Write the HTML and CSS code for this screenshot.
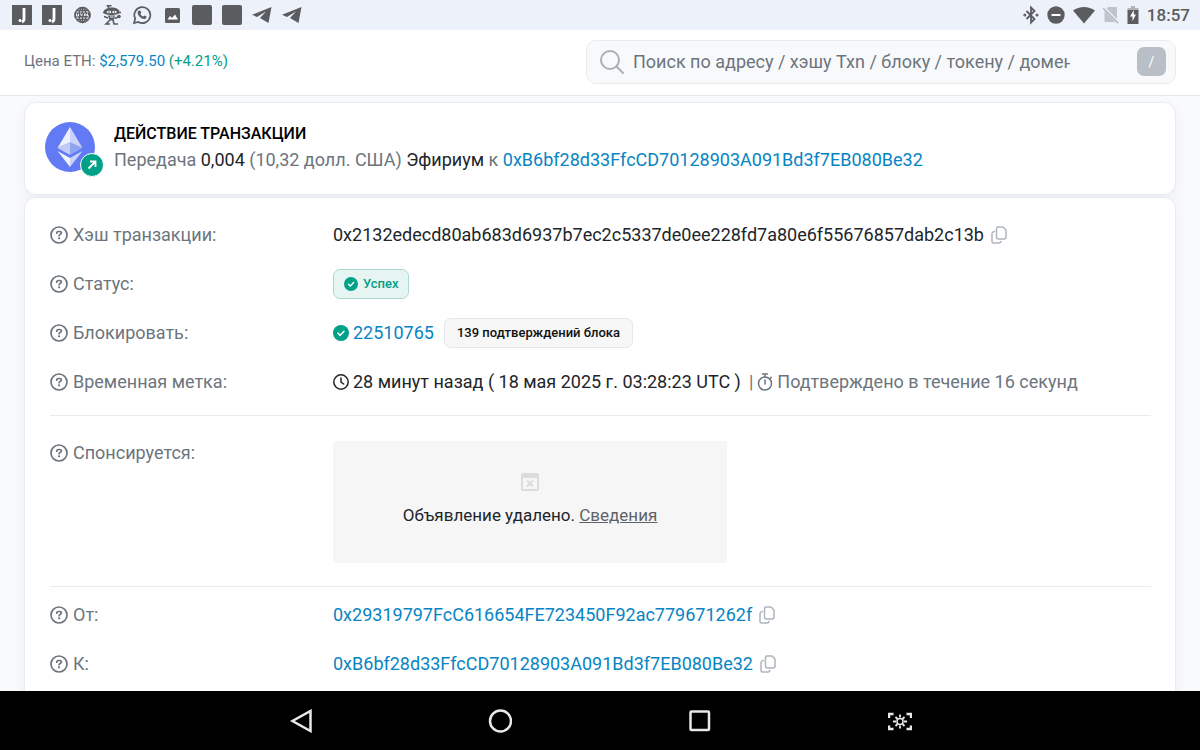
FILE: index.html
```html
<!DOCTYPE html>
<html lang="ru">
<head>
    <meta charset="UTF-8">
    <meta name="viewport" content="width=device-width, initial-scale=1.0">
    <title>Детали транзакции</title>
    <link rel="stylesheet" href="styles.css">
</head>
<body>
    <!-- Shared icons -->
    <svg class="sprite" aria-hidden="true">
        <symbol id="help" viewBox="0 0 18 18">
            <circle cx="9" cy="9" r="8" fill="none" stroke="currentColor" stroke-width="1.7"/>
            <path d="M6.700 7.200c0-1 .8-1.700 1.800-1.700h1.100c1 0 1.800.7 1.800 1.600 0 1.300-2.300 1.400-2.300 2.600" fill="none" stroke="currentColor" stroke-width="1.7" stroke-linecap="round"/>
            <circle cx="9.1" cy="12.300" r="1.100" fill="currentColor"/>
        </symbol>
        <symbol id="copy" viewBox="0 0 16 18">
            <path d="M7 1h5l3 3v7a2 2 0 0 1-2 2H7.500a2 2 0 0 1-2-2V2.500A1.500 1.500 0 0 1 7 1zM3.500 5.500A2.500 2.500 0 0 0 1 7.500v8A1.500 1.500 0 0 0 2.500 17H8a2 2 0 0 0 2-1.500" fill="none" stroke="currentColor" stroke-width="1.5" stroke-linejoin="round" stroke-linecap="round"/>
        </symbol>
        <symbol id="check" viewBox="0 0 16 16">
            <circle cx="8" cy="8" r="8" fill="#00a186"/>
            <path d="M5 8.200l2.200 2.100L11 6.300" fill="none" stroke="#fff" stroke-width="1.600" stroke-linecap="round" stroke-linejoin="round"/>
        </symbol>
        <symbol id="app-j" viewBox="0 0 20 20">
            <path d="M0 0h20v20H0z" fill="#5b5c60"/>
            <path d="M12 3v11c0 1.500-.8 2.500-2 3" fill="none" stroke="#fff" stroke-width="2.800"/>
            <circle cx="8" cy="15.500" r="1.500" fill="#fff"/>
        </symbol>
        <symbol id="plane" viewBox="0 0 20 18">
            <path d="M19.500 1L0 8.800l5 2.200L14 5.500 8 12l8.500 5z" fill="#5b5c60"/>
        </symbol>
    </svg>

    <div class="status-bar">
        <div class="status-apps">
            <svg width="20" height="20"><use href="#app-j"/></svg>
            <svg width="20" height="20"><use href="#app-j"/></svg>
            <svg width="20" height="20" viewBox="0 0 20 20" fill="none" stroke="#5b5c60" stroke-width="1.4">
                <circle cx="10.500" cy="10" r="7.500"/>
                <ellipse cx="10.500" cy="10" rx="3.500" ry="7.500"/>
                <path d="M10.500 2v16M5 5.500h11M5 14.500h11"/>
                <path d="M2.500 10h16" stroke-width="5"/>
                <path d="M4.500 8.500v2.500h2V8.500M8.500 8.500l1 2.500 1-2.500M12.500 11V9H14v2M15.500 8.500V11H17" stroke="#eef2fa" stroke-width="1"/>
            </svg>
            <svg width="20" height="20" viewBox="0 0 20 20">
                <path d="M1.500 7c0-2.200 4-4.500 8.500-4.500S17.500 4.800 17.500 7s-4 3-8 3-8-.8-8-3z" fill="#5b5c60"/>
                <path d="M7 3L5.500.8 9.500.8M1 7.500h18" fill="none" stroke="#5b5c60" stroke-width="1.400"/>
                <ellipse cx="7" cy="7" rx="2.300" ry="1.300" fill="#eef2fa"/>
                <ellipse cx="12.500" cy="7" rx="2.300" ry="1.300" fill="#eef2fa"/>
                <circle cx="7" cy="7" r=".8" fill="#5b5c60"/>
                <circle cx="12.500" cy="7" r=".8" fill="#5b5c60"/>
                <path d="M6 10.500h7l-1.500 5h-4z" fill="#5b5c60"/>
                <path d="M6 13l-4-1.500M8 15l-4 4h4M11 15l1 4h4M12.500 13.500l4-1.500" fill="none" stroke="#5b5c60" stroke-width="1.600"/>
                <circle cx="17" cy="11.500" r="1.800" fill="#5b5c60"/>
                <path d="M8 12h3.500" stroke="#eef2fa"/>
            </svg>
            <svg width="20" height="20" viewBox="0 0 20 20">
                <path d="M2 18l1.200-4.300A8 8 0 1 1 6.300 17z" fill="none" stroke="#5b5c60" stroke-width="1.700"/>
                <path d="M7 5.500l1.500.2.800 2-.9 1.200c.7 1.300 1.600 2.100 2.900 2.700l1.200-1.100 2 .9c.2 1.500-1 2.600-2.400 2.600-3.400-.4-6.300-3.500-6.500-6.300 0-1 .5-1.700 1.400-2.200z" fill="#5b5c60"/>
            </svg>
            <svg width="20" height="20" viewBox="0 0 20 20">
                <rect x="3" y="3" width="15" height="15" rx="1.500" fill="#5b5c60"/>
                <path d="M5.500 14.500L8 11l2 2 3-3.500 3 5z" fill="#fff"/>
            </svg>
            <svg width="20" height="20"><rect width="20" height="20" rx="2" fill="#5b5c60"/></svg>
            <svg width="20" height="20"><rect width="20" height="20" rx="2" fill="#5b5c60"/></svg>
            <svg width="20" height="18"><use href="#plane"/></svg>
            <svg width="20" height="18"><use href="#plane"/></svg>
        </div>
        <div class="status-system">
            <svg width="16" height="20" viewBox="0 0 16 20" fill="none" stroke="#5b5c60" stroke-width="1.800">
                <path d="M3.500 6l8 8L8 17.500v-15L11.500 6l-8 8"/>
                <circle cx="1.800" cy="10" r=".6"/>
                <circle cx="14" cy="10" r=".6"/>
            </svg>
            <svg width="18" height="18" viewBox="0 0 18 18">
                <circle cx="9" cy="9" r="8.700" fill="#5b5c60"/>
                <path d="M4.500 9h9" stroke="#fff" stroke-width="2"/>
            </svg>
            <svg width="22" height="18" viewBox="0 0 22 18"><path d="M0 4.500C6.500-.3 15.500-.3 22 4.500L11 17.500z" fill="#5b5c60"/></svg>
            <svg width="16" height="18" viewBox="0 0 16 18">
                <path d="M5 1h9v15H1.500V5z" fill="#c0c3c9"/>
                <path d="M0 1l15.500 16" stroke="#eef2fa" stroke-width="3"/>
                <path d="M0 2l15 15" stroke="#aeb1b7" stroke-width="1.500"/>
            </svg>
            <svg width="12" height="18" viewBox="0 0 12 18">
                <path d="M4 0h4v2h3.500v3H.5V2H4z" fill="#b0b3b8"/>
                <path d="M.5 4h11v14H.5z" fill="#5b5c60"/>
                <path d="M6.800 4L3 10.500h2.500V15L9 8.500H6.800z" fill="#fff"/>
            </svg>
            <span class="clock">18:57</span>
        </div>
    </div>

    <header class="top-bar">
        <p class="price">Цена ETH: <a href="#">$2,579.50</a> <span>(+4.21%)</span></p>
        <form class="search">
            <svg width="24" height="24" viewBox="0 0 24 24" fill="none" stroke="#a9b0b7" stroke-width="2" stroke-linecap="round">
                <circle cx="10" cy="10" r="9"/>
                <path d="M16.500 16.500L23 23"/>
            </svg>
            <input type="text" aria-label="Поиск" placeholder="Поиск по адресу / хэшу Txn / блоку / токену / доменному имени">
            <button type="button">/</button>
        </form>
    </header>

    <main>
        <section class="card action-card">
            <div class="token">
                <svg width="50" height="50" viewBox="0 0 50 50">
                    <circle cx="25" cy="25" r="25" fill="#627bf5"/>
                    <path d="M25 5v15.500L12.500 26z" fill="#eef1fd"/>
                    <path d="M25 5v15.500L37.500 26z" fill="#cbd4f8"/>
                    <path d="M25 20.500V33L12.500 26z" fill="#c0cbf7"/>
                    <path d="M25 20.500V33l12.500-7z" fill="#8fa3f0"/>
                    <path d="M12.500 29L25 36v9z" fill="#f1f4fe"/>
                    <path d="M37.500 29L25 36v9z" fill="#cbd4f8"/>
                </svg>
                <svg class="token-badge" width="24" height="24" viewBox="0 0 24 24">
                    <circle cx="12" cy="12" r="11.500" fill="#00a186" stroke="#fff"/>
                    <path d="M8.500 15.500l7-7M10 8.500h5.500V14" fill="none" stroke="#fff" stroke-width="1.800"/>
                </svg>
            </div>
            <div>
                <h1>ДЕЙСТВИЕ ТРАНЗАКЦИИ</h1>
                <p class="action-text">Передача <b>0,004</b> (10,32 долл. США) <b>Эфириум</b> к <a href="#">0xB6bf28d33FfcCD70128903A091Bd3f7EB080Be32</a></p>
            </div>
        </section>

        <section class="card details-card">
            <dl>
                <div class="row">
                    <dt><svg width="18" height="18"><use href="#help"/></svg>Хэш транзакции:</dt>
                    <dd>0x2132edecd80ab683d6937b7ec2c5337de0ee228fd7a80e6f55676857dab2c13b
                        <button class="copy-button" aria-label="Копировать"><svg width="16" height="18"><use href="#copy"/></svg></button></dd>
                </div>
                <div class="row">
                    <dt><svg width="18" height="18"><use href="#help"/></svg>Статус:</dt>
                    <dd><span class="badge success"><svg width="14" height="14"><use href="#check"/></svg>Успех</span></dd>
                </div>
                <div class="row">
                    <dt><svg width="18" height="18"><use href="#help"/></svg>Блокировать:</dt>
                    <dd><svg class="lead-icon" width="16" height="16"><use href="#check"/></svg><a href="#">22510765</a><span class="badge confirmations">139 подтверждений блока</span></dd>
                </div>
                <div class="row">
                    <dt><svg width="18" height="18"><use href="#help"/></svg>Временная метка:</dt>
                    <dd>
                        <svg class="lead-icon" width="16" height="16" viewBox="0 0 16 16" fill="none" stroke="currentColor" stroke-width="1.500" stroke-linecap="round">
                            <circle cx="8" cy="8" r="7.200"/>
                            <path d="M8 4v4.200l2.700 1.800"/>
                        </svg>
                        <span>28 минут назад ( 18 мая 2025 г. 03:28:23 UTC )</span>
                        <span class="confirmed">|
                            <svg width="16" height="18" viewBox="0 0 16 18" fill="none" stroke="currentColor" stroke-width="1.500" stroke-linecap="round">
                                <circle cx="8" cy="10.500" r="6.500"/>
                                <path d="M5.500 1h5M8 1v3M8 7v4M13 5.500l1.200-1.200"/>
                            </svg>
                            Подтверждено в течение 16 секунд</span>
                    </dd>
                </div>
                <div class="row sponsored">
                    <dt><svg width="18" height="18"><use href="#help"/></svg>Спонсируется:</dt>
                    <dd>
                        <div class="ad">
                            <svg width="18" height="18" viewBox="0 0 18 18" fill="none" stroke="#dcdcdc" stroke-width="2">
                                <rect x="1" y="1" width="16" height="16" rx="1"/>
                                <path d="M1 3h16" stroke-width="4"/>
                                <path d="M6 7.500l6 6M12 7.500l-6 6"/>
                            </svg>
                            <p>Объявление удалено. <a href="#">Сведения</a></p>
                        </div>
                    </dd>
                </div>
                <div class="row">
                    <dt><svg width="18" height="18"><use href="#help"/></svg>От:</dt>
                    <dd><a href="#">0x29319797FcC616654FE723450F92ac779671262f</a>
                        <button class="copy-button" aria-label="Копировать"><svg width="16" height="18"><use href="#copy"/></svg></button></dd>
                </div>
                <div class="row">
                    <dt><svg width="18" height="18"><use href="#help"/></svg>К:</dt>
                    <dd><a href="#">0xB6bf28d33FfcCD70128903A091Bd3f7EB080Be32</a>
                        <button class="copy-button" aria-label="Копировать"><svg width="16" height="18"><use href="#copy"/></svg></button></dd>
                </div>
            </dl>
        </section>
    </main>

    <nav class="system-nav">
        <button aria-label="Назад">
            <svg width="24" height="24" viewBox="0 0 24 24"><path d="M22.500 2v20L4.500 12z"/></svg>
        </button>
        <button aria-label="Домой">
            <svg width="24" height="24" viewBox="0 0 24 24"><circle cx="12.500" cy="12" r="10.500"/></svg>
        </button>
        <button aria-label="Недавние">
            <svg width="24" height="24" viewBox="0 0 24 24"><rect x="2.500" y="2.500" width="18.500" height="18.500" rx="1"/></svg>
        </button>
        <button aria-label="Снимок экрана">
            <svg width="24" height="24" viewBox="0 0 24 24">
                <path d="M1 9V5h4.500M18.500 5H23v4M23 16.500V20h-4.500M5.500 20H1v-3.500"/>
                <circle cx="12" cy="12.500" r="3" stroke-width="1.500"/>
                <path d="M12 5.500v3M12 16.500v3M5 12.500h3M16 12.500h3M7.500 8l2 2M16.500 8l-2 2M7.500 17l2-2M16.500 17l-2-2" stroke-width="1.800"/>
            </svg>
        </button>
    </nav>
</body>
</html>
```

FILE: styles.css
```css
* {
    margin: 0;
    padding: 0;
    box-sizing: border-box;
}

body {
    height: 100vh;
    display: flex;
    flex-direction: column;
    overflow: hidden;
    font-family: Roboto, sans-serif;
    font-size: 18px;
    color: #212529;
    background-color: #f9fafc;
}

svg {
    display: block;
    flex-shrink: 0;
}

a {
    color: #0784c3;
    text-decoration: none;
}

button {
    font-family: inherit;
    border: none;
    background: none;
    cursor: pointer;
}

.sprite {
    position: absolute;
    width: 0;
    height: 0;
}

/* Device status bar */
.status-bar {
    flex-shrink: 0;
    height: 30px;
    padding: 0 10px 0 12px;
    display: flex;
    align-items: center;
    justify-content: space-between;
    background-color: #edf2fa;
}

.status-apps {
    display: flex;
    align-items: center;
    gap: 10px;
}

.status-system {
    display: flex;
    align-items: center;
    gap: 8px;
}

.clock {
    font-size: 17px;
    font-weight: 500;
    color: #5b5c60;
}

/* Price and search */
.top-bar {
    flex-shrink: 0;
    height: 66px;
    padding: 0 24px 2px;
    display: flex;
    align-items: center;
    justify-content: space-between;
    background-color: #fff;
    border-bottom: 1px solid #e6e9ec;
}

.price {
    padding-bottom: 2px;
    font-size: 15px;
    color: #6c757d;
}

.price span {
    color: #00a186;
}

.search {
    width: 590px;
    height: 44px;
    padding: 0 9px 0 13px;
    display: flex;
    align-items: center;
    background-color: #f8f9fb;
    border: 1px solid #e9ecef;
    border-radius: 10px;
}

.search input {
    flex: 1;
    min-width: 0;
    margin: 0 67px 0 9px;
    border: none;
    outline: none;
    background: none;
    font-family: inherit;
    font-size: 18px;
}

.search input::placeholder {
    color: #6c757d;
}

.search button {
    width: 29px;
    height: 29px;
    border-radius: 7px;
    background-color: #b9bfc6;
    color: #fff;
    font-size: 14px;
}

/* Cards */
main {
    flex: 1;
    min-height: 0;
    overflow: hidden;
    padding: 6px 24px 0;
}

.card {
    background-color: #fff;
    border: 1px solid #e9ecef;
    border-radius: 12px;
    box-shadow: 0 4px 12px rgba(189, 197, 209, 0.2);
}

.action-card {
    height: 93px;
    padding: 0 20px 3px;
    margin-bottom: 2px;
    display: flex;
    align-items: center;
    gap: 19px;
}

.token {
    position: relative;
}

.token-badge {
    position: absolute;
    right: -9px;
    bottom: -5px;
}

h1 {
    font-size: 16px;
    line-height: 24px;
    font-weight: 500;
    color: #000;
}

.action-text {
    line-height: 27px;
    color: #6c757d;
}

.action-text b {
    font-weight: 400;
    color: #212529;
}

.details-card {
    padding: 12px 24px 40px 25px;
}

.row {
    display: grid;
    grid-template-columns: 283px 1fr;
    align-items: center;
    min-height: 49px;
}

dt {
    display: flex;
    align-items: center;
    gap: 5px;
    color: #6c757d;
}

dd {
    display: flex;
    align-items: center;
    white-space: nowrap;
}

.lead-icon {
    margin-right: 4px;
}

.copy-button {
    margin-left: 7px;
    color: #adb5bd;
}

.badge {
    height: 30px;
    padding: 0 12px;
    display: flex;
    align-items: center;
    gap: 5px;
    border-radius: 7px;
    font-size: 13px;
    font-weight: 500;
}

.success {
    padding: 0 10px;
    color: #00a186;
    background-color: #e6f4f2;
    border: 1px solid #a8dcd2;
}

.confirmations {
    margin-left: 10px;
    color: #111;
    background-color: #f7f7f8;
    border: 1px solid #e4e6e9;
}

.confirmed {
    display: flex;
    align-items: center;
    gap: 4px;
    margin-left: 8px;
    color: #6c757d;
}

/* Sponsored block */
.sponsored {
    margin: 9px 0 3px;
    padding: 25px 0 23px;
    align-items: start;
    border-top: 1px solid #e9ecef;
    border-bottom: 1px solid #e9ecef;
}

.sponsored dt {
    line-height: 24px;
}

.ad {
    width: 394px;
    height: 122px;
    padding-bottom: 6px;
    display: flex;
    flex-direction: column;
    align-items: center;
    justify-content: center;
    gap: 14px;
    font-size: 17px;
    background-color: #f6f6f6;
}

.ad a {
    color: #5f6368;
    text-decoration: underline;
}

/* Device navigation bar */
.system-nav {
    flex-shrink: 0;
    height: 59px;
    padding: 0 200px;
    display: grid;
    grid-template-columns: repeat(4, 1fr);
    align-items: center;
    background-color: #000;
}

.system-nav button {
    justify-self: center;
}

.system-nav svg {
    fill: none;
    stroke: #e8e8e8;
    stroke-width: 2.5;
}
```
